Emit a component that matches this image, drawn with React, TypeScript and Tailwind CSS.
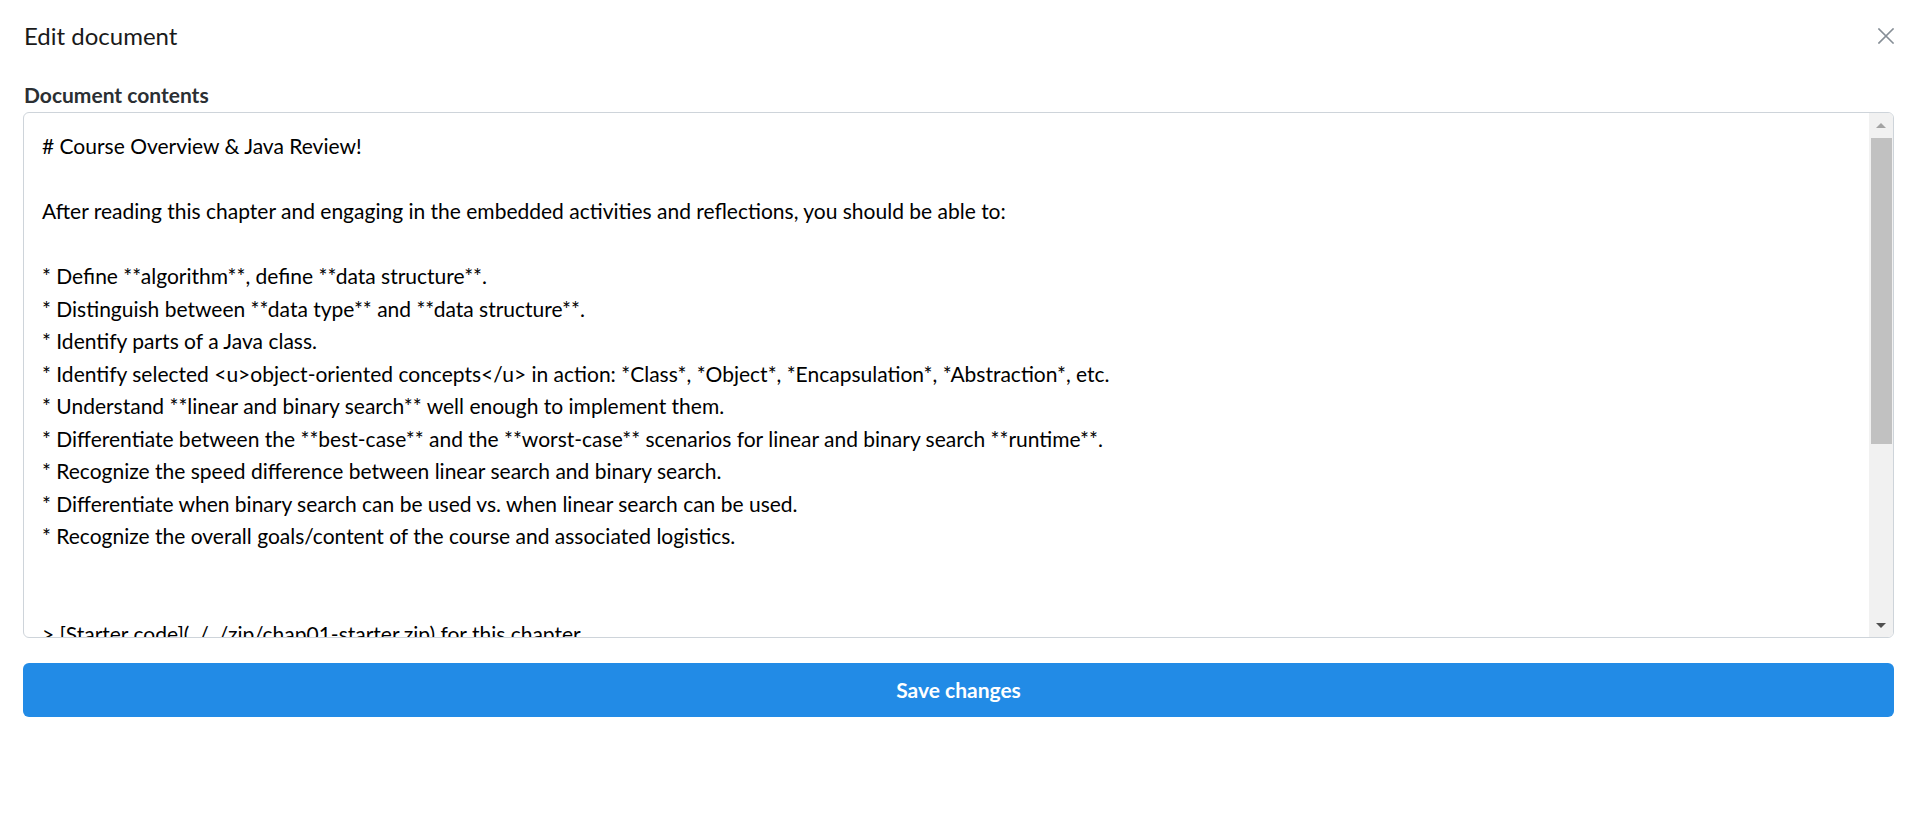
const contents = `# Course Overview & Java Review!

After reading this chapter and engaging in the embedded activities and reflections, you should be able to:

* Define **algorithm**, define **data structure**.
* Distinguish between **data type** and **data structure**.
* Identify parts of a Java class.
* Identify selected <u>object-oriented concepts</u> in action: *Class*, *Object*, *Encapsulation*, *Abstraction*, etc.
* Understand **linear and binary search** well enough to implement them.
* Differentiate between the **best-case** and the **worst-case** scenarios for linear and binary search **runtime**.
* Recognize the speed difference between linear search and binary search.
* Differentiate when binary search can be used vs. when linear search can be used.
* Recognize the overall goals/content of the course and associated logistics.


> [Starter code](../../zip/chap01-starter.zip) for this chapter.`;

function Scrollbar() {
  return (
    <div className="flex w-[24px] shrink-0 flex-col bg-[#f1f1f1]">
      <div className="flex h-[25px] items-center justify-center">
        <div className="h-0 w-0 border-x-[5px] border-b-[5px] border-x-transparent border-b-[#a3a3a3]" />
      </div>
      <div className="ml-[2px] mr-[1px] h-[306px] bg-[#c1c1c1]" />
      <div className="flex-1" />
      <div className="flex h-[24px] items-center justify-center">
        <div className="h-0 w-0 border-x-[5px] border-t-[5px] border-x-transparent border-t-[#505050]" />
      </div>
    </div>
  );
}

export default function App() {
  return (
    <div
      className="min-h-screen bg-white pl-[23px] pr-[13px] text-black"
      style={{ fontFamily: "Lato, 'Noto Sans', sans-serif" }}
    >
      <div className="flex h-[72px] items-center justify-between">
        <h2 className="pl-[1px] text-[24px] leading-none text-[#1a1a1a]">
          Edit document
        </h2>
        <button className="flex h-[42px] w-[42px] items-center justify-end">
          <svg width="16" height="16" viewBox="0 0 16 16" fill="none">
            <path
              d="M1 1L15 15M15 1L1 15"
              stroke="#868e96"
              strokeWidth="1.6"
              strokeLinecap="square"
            />
          </svg>
        </button>
      </div>

      <div className="mt-[7px] h-[33px] pl-[1px] text-[21px] font-bold leading-[32px] text-[#2b2f33]">
        Document contents
      </div>

      <div className="flex h-[526px] overflow-hidden rounded-[6px] border border-[#ced4da]">
        <div className="min-w-0 flex-1 overflow-hidden pl-[18px] pt-[17px] text-[21px] leading-[32.5px] whitespace-pre">
          {contents}
        </div>
        <Scrollbar />
      </div>

      <button
        className="mt-[25px] flex h-[54px] w-full items-center justify-center rounded-[6px] bg-[#228be6] text-[21px] font-bold text-white"
        style={{ fontFamily: "Lato, 'Noto Sans', sans-serif" }}
      >
        Save changes
      </button>
    </div>
  );
}
